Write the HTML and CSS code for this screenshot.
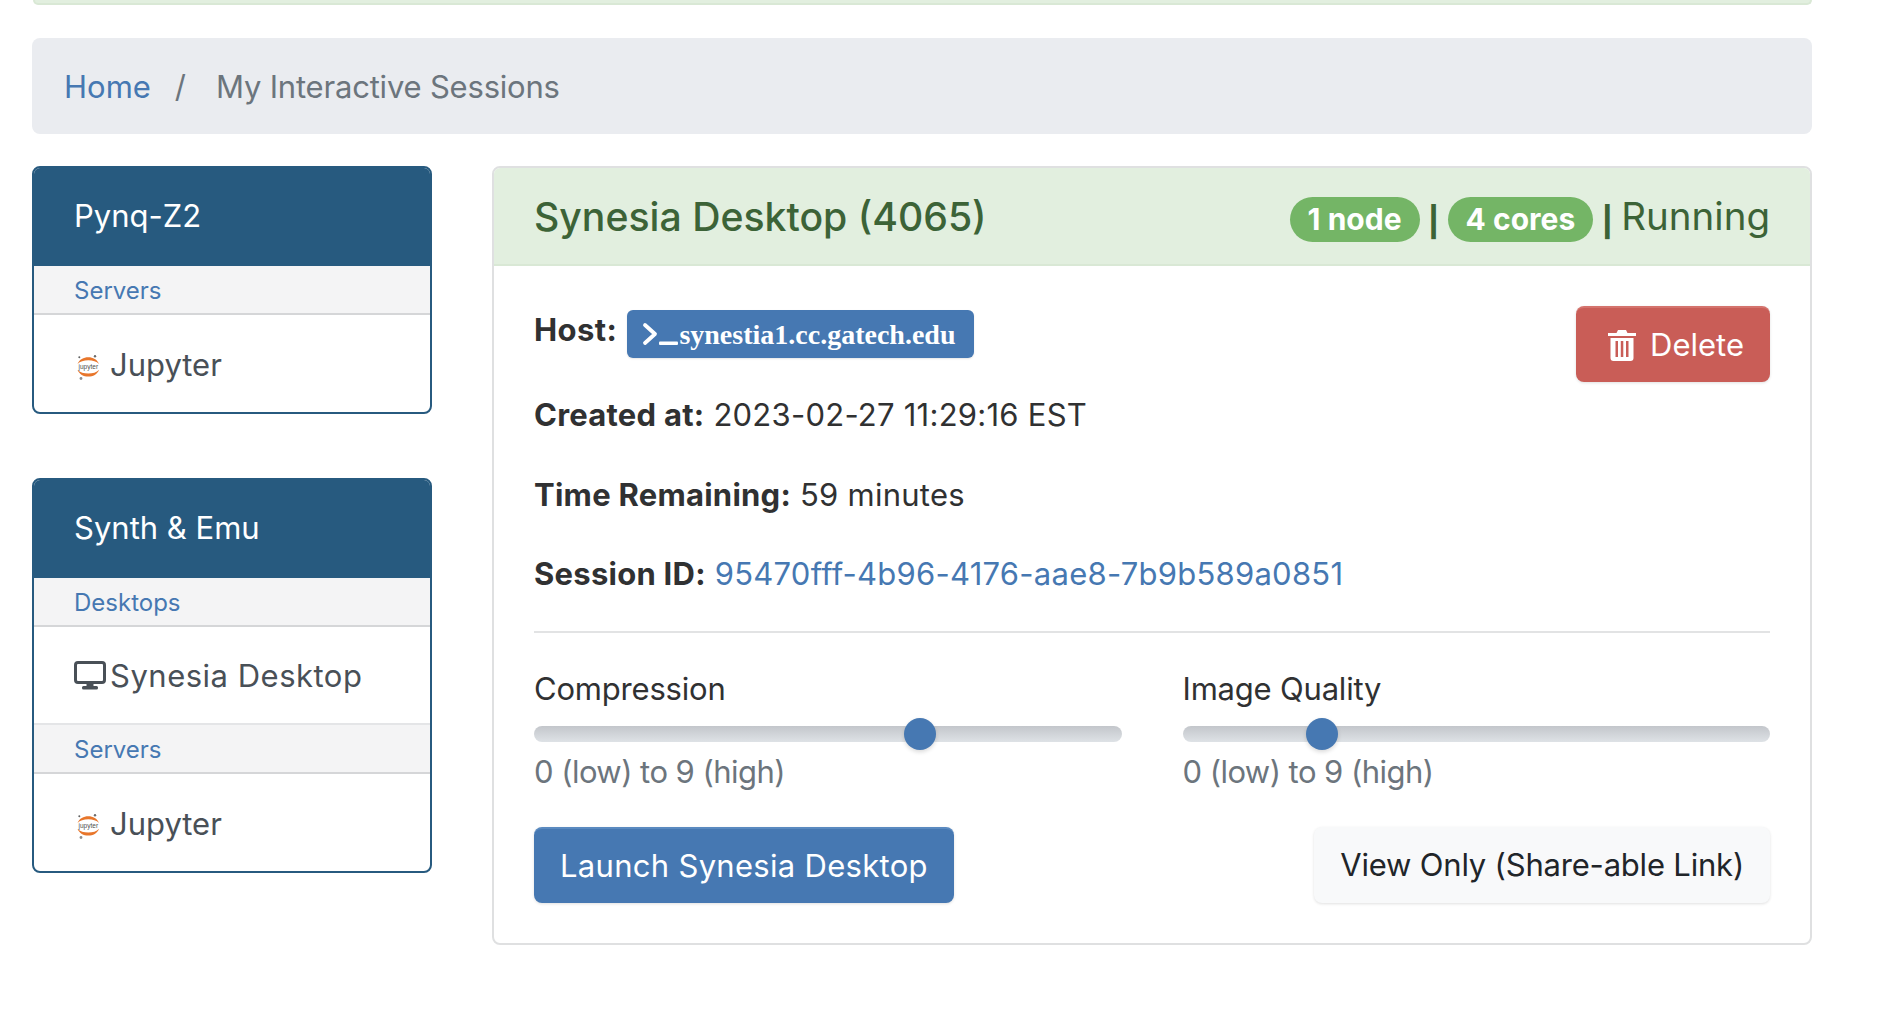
FILE: index.html
```html
<!DOCTYPE html>
<html lang="en">
<head>
    <meta charset="UTF-8">
    <title>My Interactive Sessions</title>
    <link rel="stylesheet" href="styles.css">
</head>
<body>
    <div class="alert-edge"></div>

    <nav class="breadcrumb">
        <a href="#">Home</a>
        <span class="crumb-sep">/</span>
        <span class="crumb-current">My Interactive Sessions</span>
    </nav>

    <div class="layout">
        <aside class="sidebar">
            <div class="app-card">
                <div class="app-card-title">Pynq-Z2</div>
                <div class="app-group"><a href="#">Servers</a></div>
                <a class="app-link" href="#">
                    <svg class="app-icon jupyter-icon" viewBox="0 0 24 28">
                        <path d="M.5 10C2.500 5.300 6.500 3.200 11.300 3.200S20.100 5.300 22.100 10C19.500 7.300 15.800 6.200 11.300 6.200S3.100 7.300.5 10z" fill="#e8762b"/>
                        <path d="M.5 15.700C2.500 20.400 6.500 22.500 11.300 22.500s8.800-2.100 10.800-6.800C19.500 18.400 15.800 19.500 11.300 19.500S3.100 18.400.5 15.700z" fill="#e8762b"/>
                        <circle cx="18" cy="2.300" r="1.200" fill="#6b6b6c"/>
                        <circle cx="2.300" cy="3.300" r="1" fill="#616262"/>
                        <circle cx="4" cy="24.500" r="1.400" fill="#8e8e8e"/>
                        <text x="11.300" y="15" text-anchor="middle" class="jupyter-word">jupyter</text>
                    </svg>
                    Jupyter
                </a>
            </div>

            <div class="app-card">
                <div class="app-card-title">Synth &amp; Emu</div>
                <div class="app-group"><a href="#">Desktops</a></div>
                <a class="app-link app-link-ruled" href="#">
                    <svg class="app-icon desktop-icon" viewBox="0 0 32 30">
                        <rect x="1.500" y="1.500" width="29" height="20" rx="2.500" fill="none" stroke="#495057" stroke-width="3"/>
                        <path d="M12.500 22h7v3.500h-7z" fill="#495057"/>
                        <rect x="8" y="25" width="16" height="3.500" rx="1.500" fill="#495057"/>
                    </svg>
                    <span class="app-link-wide">Synesia Desktop</span>
                </a>
                <div class="app-group"><a href="#">Servers</a></div>
                <a class="app-link" href="#">
                    <svg class="app-icon jupyter-icon" viewBox="0 0 24 28">
                        <path d="M.5 10C2.500 5.300 6.500 3.200 11.300 3.200S20.100 5.300 22.100 10C19.500 7.300 15.800 6.200 11.300 6.200S3.100 7.300.5 10z" fill="#e8762b"/>
                        <path d="M.5 15.700C2.500 20.400 6.500 22.500 11.300 22.500s8.800-2.100 10.800-6.800C19.500 18.400 15.800 19.500 11.300 19.500S3.100 18.400.5 15.700z" fill="#e8762b"/>
                        <circle cx="18" cy="2.300" r="1.200" fill="#6b6b6c"/>
                        <circle cx="2.300" cy="3.300" r="1" fill="#616262"/>
                        <circle cx="4" cy="24.500" r="1.400" fill="#8e8e8e"/>
                        <text x="11.300" y="15" text-anchor="middle" class="jupyter-word">jupyter</text>
                    </svg>
                    Jupyter
                </a>
            </div>
        </aside>

        <main class="session-card">
            <header class="session-header">
                <h2 class="session-title">Synesia Desktop (4065)</h2>
                <div class="session-status">
                    <span class="pill">1 node</span>
                    <span class="bar">|</span>
                    <span class="pill">4 cores</span>
                    <span class="bar">|</span>
                    <span>Running</span>
                </div>
            </header>

            <div class="session-body">
                <a class="btn btn-danger btn-delete" href="#">
                    <svg class="trash-icon" viewBox="0 0 28 32">
                        <path d="M0 4h8.500l1.500-3h8l1.500 3H28v3H0z" fill="#fff"/>
                        <path fill="#fff" fill-rule="evenodd" d="M2.500 9h23v20a3 3 0 0 1-3 3h-17a3 3 0 0 1-3-3zM7.500 12v16h2.500V12zM12.800 12v16h2.500V12zM18 12v16h2.500V12z"/>
                    </svg>
                    Delete
                </a>
                <p class="info info-host">
                    <strong>Host:</strong>
                    <a class="host-btn" href="#">
                        <svg class="prompt-icon" viewBox="0 0 36 24">
                            <path d="M3 3l10 9-10 9" fill="none" stroke="#fff" stroke-width="3.800" stroke-linecap="round" stroke-linejoin="round"/>
                            <rect x="17" y="19.500" width="19" height="3.500" rx="1" fill="#fff"/>
                        </svg><span class="host-name">synestia1.cc.gatech.edu</span>
                    </a>
                </p>
                <p class="info"><strong>Created at:</strong> 2023-02-27 11:29:16 EST</p>
                <p class="info"><strong>Time Remaining:</strong> 59 minutes</p>
                <p class="info"><strong>Session ID:</strong> <a href="#">95470fff-4b96-4176-aae8-7b9b589a0851</a></p>

                <hr class="rule">

                <div class="sliders">
                    <div class="slider-group">
                        <label class="slider-label" for="compression">Compression</label>
                        <input class="slider" id="compression" type="range" min="0" max="9" value="6">
                        <small class="slider-help">0 (low) to 9 (high)</small>
                    </div>
                    <div class="slider-group">
                        <label class="slider-label" for="quality">Image Quality</label>
                        <input class="slider" id="quality" type="range" min="0" max="9" value="2">
                        <small class="slider-help">0 (low) to 9 (high)</small>
                    </div>
                </div>

                <div class="actions">
                    <a class="btn btn-primary" href="#">Launch Synesia Desktop</a>
                    <a class="btn btn-light" href="#">View Only (Share-able Link)</a>
                </div>
            </div>
        </main>
    </div>
</body>
</html>
```

FILE: styles.css
```css
* {
    box-sizing: border-box;
}

body {
    margin: 0;
    padding: 0 78px 0 32px;
    background-color: #fff;
    color: #303132;
    font-family: 'Inter', 'Roboto', sans-serif;
    font-size: 31px;
    line-height: 48px;
}

a {
    color: #4678b2;
    text-decoration: none;
}

.alert-edge {
    height: 5px;
    margin-left: 1px;
    margin-bottom: 33px;
    background-color: #e2efdf;
    border: 2px solid #d9e8d5;
    border-top: none;
    border-radius: 0 0 8px 8px;
}

/* Breadcrumb */
.breadcrumb {
    display: flex;
    align-items: center;
    height: 96px;
    padding: 1px 32px 0;
    margin-bottom: 32px;
    background-color: #eaecf0;
    border-radius: 8px;
}

.crumb-sep {
    margin: 0 30px 0 24px;
    color: #6c757d;
}

.crumb-current {
    color: #6c757d;
    letter-spacing: -0.2px;
}

.layout {
    display: flex;
    gap: 60px;
    align-items: flex-start;
}

/* Sidebar */
.sidebar {
    width: 400px;
    flex-shrink: 0;
    display: flex;
    flex-direction: column;
    gap: 64px;
}

.app-card {
    border: 2px solid #275a7f;
    border-radius: 8px;
    overflow: hidden;
}

.app-card-title {
    height: 98px;
    padding-left: 40px;
    background-color: #275a7f;
    color: #fff;
    line-height: 96px;
}

.app-group {
    height: 49px;
    padding-left: 40px;
    background-color: #f4f4f5;
    border-bottom: 2px solid #d5d6d8;
    font-size: 24px;
    line-height: 49px;
}

.app-link {
    display: flex;
    align-items: center;
    height: 97px;
    padding: 3px 0 0 40px;
    color: #495057;
}

.app-link-ruled {
    height: 98px;
    padding-top: 2px;
    border-bottom: 2px solid #e4e5e7;
}

.app-link-wide {
    letter-spacing: 0.5px;
}

.app-icon {
    flex-shrink: 0;
}

.jupyter-icon {
    width: 24px;
    height: 28px;
    margin: 6px 9px 0 3px;
}

.jupyter-word {
    font-family: 'Liberation Sans', sans-serif;
    font-size: 6.5px;
    fill: #4e4e4e;
}

.desktop-icon {
    width: 32px;
    height: 30px;
    margin-right: 4px;
}

/* Session card */
.session-card {
    flex: 1;
    height: 779px;
    border: 2px solid #dfe0e1;
    border-radius: 8px;
    overflow: hidden;
}

.session-header {
    display: flex;
    align-items: center;
    justify-content: space-between;
    height: 98px;
    padding: 0 40px;
    background-color: #e2efdf;
    border-bottom: 2px solid #d9e8d5;
    color: #3c6337;
}

.session-title {
    margin: 0;
    padding-top: 1px;
    font-size: 39.200px;
    font-weight: 500;
}

.session-status {
    display: flex;
    align-items: center;
    font-size: 38.500px;
}

.pill {
    height: 45px;
    margin-top: 7px;
    padding: 0 18px;
    background-color: #74b566;
    color: #fff;
    border-radius: 23px;
    font-size: 30px;
    font-weight: 700;
    line-height: 45px;
}

.bar {
    margin: 5px 9px 0;
    font-family: 'Liberation Sans', sans-serif;
    font-size: 36px;
    font-weight: 700;
}

.session-body {
    padding: 40px 40px 0;
}

.info {
    margin: 0 0 31.500px;
    letter-spacing: 0.25px;
}

.info strong {
    font-weight: 700;
}

.info-host {
    height: 53px;
    margin-bottom: 32px;
    letter-spacing: 0.4px;
}

.host-btn {
    display: inline-flex;
    align-items: center;
    width: 347px;
    height: 48px;
    margin-left: 1px;
    padding-left: 15px;
    background-color: #4678b2;
    border-radius: 6px;
    box-shadow: 0 1px 2px rgba(0, 0, 0, 0.1);
    color: #fff;
    font-family: 'Liberation Serif', serif;
    font-size: 28px;
    font-weight: 700;
    letter-spacing: 0;
    line-height: 48px;
    vertical-align: -5px;
}

.host-name {
    padding: 2px 0 0 1px;
}

.prompt-icon {
    width: 36px;
    height: 24px;
}

.btn {
    display: inline-flex;
    align-items: center;
    height: 76px;
    padding: 0 26px;
    border-radius: 8px;
    box-shadow: 0 1px 3px rgba(0, 0, 0, 0.12);
}

.btn-danger {
    background-color: #c95d57;
    border-top: 2px solid #d4736d;
    color: #fff;
}

.btn-primary {
    background-color: #4678b2;
    border-top: 2px solid #5a8ac0;
    color: #fff;
    letter-spacing: 0.3px;
}

.btn-light {
    background-color: #f8f9fa;
    color: #212529;
    letter-spacing: -0.2px;
}

.btn-delete {
    float: right;
    padding: 0 26px 0 32px;
}

.trash-icon {
    width: 28px;
    height: 32px;
    margin-right: 14px;
}

.rule {
    height: 2px;
    margin: 33px 0 32px;
    background-color: #e2e3e4;
    border: none;
}

/* Sliders */
.sliders {
    display: grid;
    grid-template-columns: 1fr 1fr;
    column-gap: 61px;
}

.slider-group {
    display: flex;
    flex-direction: column;
    height: 162px;
}

.slider-label {
    height: 48px;
    letter-spacing: -0.2px;
}

.slider {
    -webkit-appearance: none;
    appearance: none;
    width: 100%;
    height: 42px;
    margin: 0 0 -7px;
    padding: 0;
    background: transparent;
}

.slider::-webkit-slider-runnable-track {
    height: 16px;
    border-radius: 8px;
    background: linear-gradient(#c3c6cb, #dee2e6);
}

.slider::-webkit-slider-thumb {
    -webkit-appearance: none;
    width: 32px;
    height: 32px;
    margin-top: -8px;
    border-radius: 50%;
    background-color: #4678b2;
    box-shadow: 0 2px 4px rgba(0, 0, 0, 0.15);
}

.slider-help {
    color: #6c757d;
    font-size: 31px;
    letter-spacing: -0.55px;
}

.actions {
    display: flex;
    justify-content: space-between;
}
```
